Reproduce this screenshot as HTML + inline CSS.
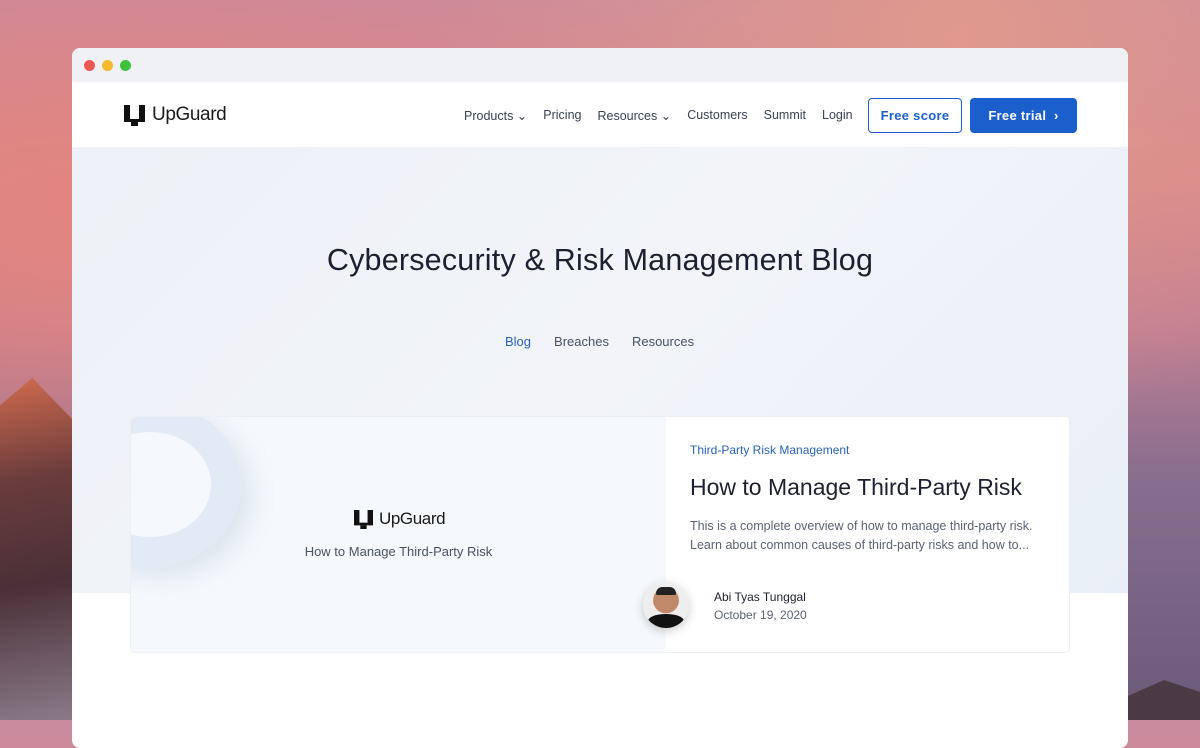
<!DOCTYPE html>
<html><head><meta charset="utf-8"><style>
*{margin:0;padding:0;box-sizing:border-box}
body{width:1200px;height:720px;overflow:hidden;font-family:"Liberation Sans",sans-serif;position:relative;
background:linear-gradient(180deg,#c98a9e 0%,#d9878a 25%,#c27f93 45%,#8a6f8f 65%,#6a5a78 100%);}
.sky{position:absolute;inset:0;background:radial-gradient(ellipse at 80% 5%,#e0998c 0,transparent 40%),radial-gradient(ellipse at 10% 30%,#e3857f 0,transparent 45%);}
.mtnL{position:absolute;left:0;top:378px;width:72px;height:342px;background:linear-gradient(170deg,#d06a4e,#6a3c3c 30%,#4a3038 60%,#8a7a88);clip-path:polygon(0 8%,45% 0,100% 12%,100% 100%,0 100%)}
.mtnR{position:absolute;right:0;top:680px;width:72px;height:40px;background:#4a3a44;clip-path:polygon(0 40%,50% 0,100% 30%,100% 100%,0 100%)}
.win{position:absolute;left:72px;top:48px;width:1056px;height:700px;background:#fff;border-radius:8px;overflow:hidden}
.bar{height:34px;background:#f0f1f4;position:relative}
.dot{position:absolute;top:12px;width:11px;height:11px;border-radius:50%}
.nav{height:66px;background:#fff;position:relative;border-bottom:1px solid #eef0f4}
.logo{position:absolute;display:flex;align-items:center;gap:7px;font-size:19px;color:#1a1a1a;letter-spacing:-.4px}
.links{position:absolute;left:392px;top:0;height:66px;display:flex;align-items:center;font-size:12.5px;color:#3a4256}
.links span{margin-right:16px}
.btn{position:absolute;top:16px;height:35px;border-radius:4px;font-size:13px;font-weight:bold;display:flex;align-items:center;justify-content:center;letter-spacing:.3px}
.hero{position:absolute;top:100px;left:0;width:1056px;height:445px;background:linear-gradient(135deg,#edf1f7,#f2f4f9 50%,#e9eff8)}
h1{position:absolute;top:195px;width:1056px;text-align:center;font-weight:normal;font-size:30.5px;color:#1c2030;letter-spacing:.2px}
.tabs{position:absolute;top:286px;left:433px;font-size:13px;color:#4a5266}
.card{position:absolute;left:59px;top:369px;width:938px;height:235px;border-radius:4px;background:#fff;box-shadow:0 0 0 1px #eceff4}
.img{position:absolute;left:0;top:0;width:535px;height:235px;background:#f5f8fc;overflow:hidden;border-radius:4px 0 0 4px}
</style></head><body>
<div class="sky"></div><div class="mtnL"></div><div class="mtnR"></div>
<div class="win">
<div class="bar"><div class="dot" style="left:12px;background:#ee5a52"></div><div class="dot" style="left:30px;background:#f5b82e"></div><div class="dot" style="left:48px;background:#3ec23c"></div></div>
<div class="nav">
<div class="logo" style="left:52px;top:22px"><svg width="21" height="21" viewBox="0 0 21 21"><rect x="0" y="0" width="6" height="17" fill="#111"/><rect x="15" y="0" width="6" height="17" fill="#111"/><rect x="6" y="14" width="9" height="3" fill="#111"/><rect x="7" y="17" width="7" height="4" fill="#111"/></svg>UpGuard</div>
<div class="links"><span>Products ⌄</span><span>Pricing</span><span>Resources ⌄</span><span>Customers</span><span>Summit</span><span>Login</span></div>
<div class="btn" style="left:796px;width:94px;border:1.5px solid #1b5fcc;color:#1b5fcc">Free score</div>
<div class="btn" style="left:898px;width:107px;background:#1b5fcc;color:#fff">Free trial &nbsp;›</div>
</div>
<div class="hero"></div>
<h1>Cybersecurity &amp; Risk Management Blog</h1>
<div class="tabs"><span style="color:#2a62b8">Blog</span><span style="margin-left:23px">Breaches</span><span style="margin-left:23px">Resources</span></div>
<div class="card">
<div class="img">
<div style="position:absolute;left:-70px;top:-15px;width:180px;height:165px;border-radius:50%;border:30px solid #e2eaf5;border-left-width:20px;box-shadow:10px 10px 24px rgba(150,170,200,.25)"></div>
<div class="logo" style="left:223px;top:92px;font-size:17px;gap:6px"><svg width="19" height="19" viewBox="0 0 21 21"><rect x="0" y="0" width="6" height="17" fill="#111"/><rect x="15" y="0" width="6" height="17" fill="#111"/><rect x="6" y="14" width="9" height="3" fill="#111"/><rect x="7" y="17" width="7" height="4" fill="#111"/></svg>UpGuard</div>
<div style="position:absolute;top:127px;width:535px;text-align:center;font-size:13px;color:#4a5266">How to Manage Third-Party Risk</div>
</div>
<div style="position:absolute;left:559px;top:26px;font-size:12px;color:#2a62b8">Third-Party Risk Management</div>
<div style="position:absolute;left:559px;top:57px;font-size:23px;color:#1c2030">How to Manage Third-Party Risk</div>
<div style="position:absolute;left:559px;top:100px;font-size:12.5px;line-height:19px;color:#5a6275;width:350px">This is a complete overview of how to manage third-party risk. Learn about common causes of third-party risks and how to...</div>
<div style="position:absolute;left:512px;top:165px;width:46px;height:46px;border-radius:50%;background:radial-gradient(circle at 50% 40%,#c08a6a 0 35%,#eee 37%);box-shadow:0 3px 10px rgba(0,0,0,.2);overflow:hidden"><div style="position:absolute;bottom:0;left:5px;width:36px;height:14px;background:#111;border-radius:50% 50% 0 0"></div><div style="position:absolute;top:5px;left:13px;width:20px;height:8px;background:#222;border-radius:8px 8px 2px 2px"></div></div>
<div style="position:absolute;left:583px;top:173px;font-size:12px;color:#1c2030">Abi Tyas Tunggal</div>
<div style="position:absolute;left:583px;top:191px;font-size:12px;color:#5a6275">October 19, 2020</div>
</div>
</div>
</body></html>
